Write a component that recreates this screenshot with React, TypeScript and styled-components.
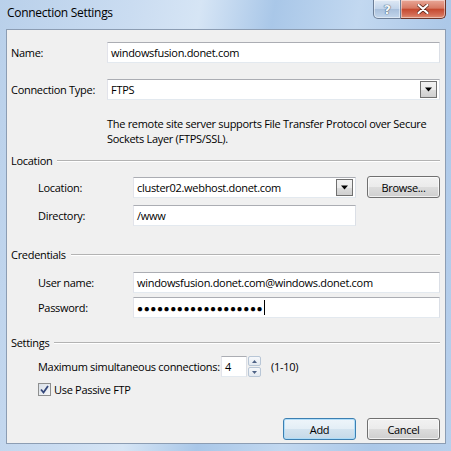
import React from "react";
import styled, { createGlobalStyle } from "styled-components";

const GlobalStyle = createGlobalStyle`
  html, body {
    margin: 0;
    padding: 0;
  }
  body {
    width: 451px;
    height: 451px;
    overflow: hidden;
    font-family: "Open Sans", "Noto Sans", sans-serif;
    font-size: 11px;
    letter-spacing: -0.3px;
    color: #000;
  }
`;

const Window = styled.div`
  width: 451px;
  height: 451px;
  box-sizing: border-box;
  display: flex;
  flex-direction: column;
  padding: 0 5px 7px 6px;
  background: linear-gradient(
    100deg,
    #b9d0ea 0%,
    #cadcf1 25%,
    #d6e5f5 38%,
    #a9c7e8 52%,
    #c2d8f0 68%,
    #acc8e8 85%,
    #b8d0ec 100%
  );
`;

const TitleBar = styled.div`
  height: 29px;
  display: flex;
  align-items: flex-start;
  justify-content: space-between;
`;

const Title = styled.div`
  padding: 5px 0 0 1px;
  font-size: 12px;
  line-height: 16px;
`;

const CaptionButtons = styled.div`
  display: flex;
`;

const CaptionButton = styled.div<{ $close?: boolean }>`
  width: ${(p) => (p.$close ? 45 : 28)}px;
  height: 19px;
  box-sizing: border-box;
  display: flex;
  align-items: center;
  justify-content: center;
  border: 1px solid ${(p) => (p.$close ? "#6d3529" : "#6c7e97")};
  border-top: none;
  border-left: ${(p) => (p.$close ? "none" : undefined)};
  border-radius: ${(p) => (p.$close ? "0 0 5px 0" : "0 0 0 5px")};
  background: ${(p) =>
    p.$close
      ? "linear-gradient(#e9a898, #d77a64 45%, #c54a30 52%, #d26a52 80%, #e08e72)"
      : "linear-gradient(#dfe9f5, #c2d4ea 48%, #a9c0dc 52%, #c3d6ec)"};
  box-shadow: inset 0 0 0 1px rgba(255, 255, 255, 0.45);
`;

const HelpGlyph = styled.span`
  font-family: "DejaVu Sans", sans-serif;
  font-size: 13px;
  font-weight: bold;
  color: #f4f8fc;
  text-shadow: 0 0 1px #33485f, 0 0 1px #33485f;
  line-height: 1;
`;

const Client = styled.div`
  flex: 1;
  display: flex;
  flex-direction: column;
  background: #f0f0f0;
  border: 1px solid #8c9db3;
  padding: 12px 5px 3px 4px;
`;

const TopGrid = styled.div`
  display: grid;
  grid-template-columns: 96px 1fr;
  row-gap: 16px;
  align-items: center;
`;

const Label = styled.div`
  line-height: 15px;
  white-space: nowrap;
`;

const Field = styled.div<{ $width?: number }>`
  height: 21px;
  box-sizing: border-box;
  width: ${(p) => (p.$width ? `${p.$width}px` : "auto")};
  display: flex;
  align-items: center;
  background: #fff;
  border: 1px solid #abadb3;
  border-color: #abadb3 #dbdfe6 #e3e9ef #e2e3ea;
  padding: 0 2px 0 3px;
  white-space: nowrap;
  overflow: hidden;
`;

const FieldText = styled.span`
  flex: 1;
`;

const DropButton = styled.div`
  width: 17px;
  height: 17px;
  box-sizing: border-box;
  display: flex;
  align-items: center;
  justify-content: center;
  border: 1px solid #707070;
  background: linear-gradient(#f2f2f2, #ebebeb 50%, #dddddd 50%, #cfcfcf);
`;

const Description = styled.div`
  grid-column: 2;
  line-height: 15px;
  width: 330px;
`;

const SectionHeader = styled.div<{ $top: number }>`
  display: flex;
  align-items: center;
  gap: 5px;
  margin-top: ${(p) => p.$top}px;
  line-height: 15px;
  &::after {
    content: "";
    flex: 1;
    border-top: 1px solid #b3b3b3;
    border-bottom: 1px solid #ffffff;
  }
`;

const SectionGrid = styled.div<{ $top: number; $gap: number; $cols: string }>`
  display: grid;
  grid-template-columns: ${(p) => p.$cols};
  row-gap: ${(p) => p.$gap}px;
  column-gap: 11px;
  align-items: center;
  margin-top: ${(p) => p.$top}px;
  padding-left: 27px;
`;

const Button = styled.div<{ $default?: boolean }>`
  width: 73px;
  height: 22px;
  box-sizing: border-box;
  display: flex;
  align-items: center;
  justify-content: center;
  border: 1px solid ${(p) => (p.$default ? "#3c7fb1" : "#707070")};
  border-radius: 3px;
  background: ${(p) =>
    p.$default
      ? "linear-gradient(#eef5fa, #e3eef6 50%, #d3e3ef 50%, #c5d9e8)"
      : "linear-gradient(#f2f2f2, #ebebeb 50%, #dddddd 50%, #cfcfcf)"};
  box-shadow: inset 0 0 0 1px
    ${(p) => (p.$default ? "rgba(170, 220, 250, 0.9)" : "rgba(255, 255, 255, 0.7)")};
`;

const SpinRow = styled.div<{ $top: number }>`
  display: flex;
  align-items: center;
  margin-top: ${(p) => p.$top}px;
  padding-left: 27px;
`;

const SpinLabel = styled(Label)`
  width: 183px;
`;

const SpinArrows = styled.div`
  display: flex;
  flex-direction: column;
  gap: 1px;
  margin-left: 1px;
`;

const SpinArrow = styled.div`
  width: 13px;
  height: 10px;
  box-sizing: border-box;
  display: flex;
  align-items: center;
  justify-content: center;
  border: 1px solid #b8c6d6;
  border-radius: 2px;
  background: linear-gradient(#f6f8fb, #e3e9f0);
`;

const RangeText = styled.span`
  margin-left: 10px;
`;

const CheckRow = styled.div`
  display: flex;
  align-items: center;
  gap: 3px;
  margin-top: 5px;
  padding-left: 27px;
`;

const CheckBox = styled.div`
  width: 13px;
  height: 13px;
  box-sizing: border-box;
  display: flex;
  align-items: center;
  justify-content: center;
  border: 1px solid #8e8f8f;
  background: linear-gradient(135deg, #d8dfe8, #f6f7f8);
`;

const Footer = styled.div`
  margin-top: auto;
  display: flex;
  justify-content: flex-end;
  gap: 11px;
`;

const Password = styled.span`
  font-size: 10px;
  letter-spacing: 0.6px;
`;

const Caret = styled.span`
  display: inline-block;
  width: 1px;
  height: 15px;
  background: #000;
  margin-left: 1px;
`;

const Triangle = ({ up, size = 7 }: { up?: boolean; size?: number }) => (
  <svg width={size} height={Math.ceil(size / 2) + 1} viewBox="0 0 7 4">
    <path d={up ? "M0 4 L3.5 0 L7 4 Z" : "M0 0 L7 0 L3.5 4 Z"} fill="#000" />
  </svg>
);

const SmallTriangle = ({ up }: { up?: boolean }) => (
  <svg width="5" height="3" viewBox="0 0 5 3">
    <path d={up ? "M0 3 L2.5 0 L5 3 Z" : "M0 0 L5 0 L2.5 3 Z"} fill="#4d6185" />
  </svg>
);

const ComboBox = ({ text, width }: { text: string; width?: number }) => (
  <Field $width={width}>
    <FieldText>{text}</FieldText>
    <DropButton>
      <Triangle />
    </DropButton>
  </Field>
);

export default function App() {
  return (
    <>
      <GlobalStyle />
      <Window>
        <TitleBar>
          <Title>Connection Settings</Title>
          <CaptionButtons>
            <CaptionButton>
              <HelpGlyph>?</HelpGlyph>
            </CaptionButton>
            <CaptionButton $close>
              <svg width="12" height="10" viewBox="0 0 12 10">
                <path
                  d="M1.5 1 L10.5 9 M10.5 1 L1.5 9"
                  stroke="#5b2318"
                  strokeWidth="3.6"
                  strokeLinecap="round"
                />
                <path
                  d="M1.5 1 L10.5 9 M10.5 1 L1.5 9"
                  stroke="#ffffff"
                  strokeWidth="2.2"
                  strokeLinecap="round"
                />
              </svg>
            </CaptionButton>
          </CaptionButtons>
        </TitleBar>

        <Client>
          <TopGrid>
            <Label>Name:</Label>
            <Field>
              <FieldText>windowsfusion.donet.com</FieldText>
            </Field>
            <Label>Connection Type:</Label>
            <ComboBox text="FTPS" />
            <Description>
              The remote site server supports File Transfer Protocol over Secure
              Sockets Layer (FTPS/SSL).
            </Description>
          </TopGrid>

          <SectionHeader $top={7}>Location</SectionHeader>
          <SectionGrid $top={8} $gap={7} $cols="84px 223px 73px">
            <Label>Location:</Label>
            <ComboBox text="cluster02.webhost.donet.com" />
            <Button>Browse...</Button>
            <Label>Directory:</Label>
            <Field>
              <FieldText>/www</FieldText>
            </Field>
          </SectionGrid>

          <SectionHeader $top={21}>Credentials</SectionHeader>
          <SectionGrid $top={10} $gap={4} $cols="84px 1fr">
            <Label>User name:</Label>
            <Field>
              <FieldText>windowsfusion.donet.com@windows.donet.com</FieldText>
            </Field>
            <Label>Password:</Label>
            <Field>
              <Password>{"●".repeat(19)}</Password>
              <Caret />
            </Field>
          </SectionGrid>

          <SectionHeader $top={17}>Settings</SectionHeader>
          <SpinRow $top={6}>
            <SpinLabel>Maximum simultaneous connections:</SpinLabel>
            <Field $width={26}>
              <FieldText>4</FieldText>
            </Field>
            <SpinArrows>
              <SpinArrow>
                <SmallTriangle up />
              </SpinArrow>
              <SpinArrow>
                <SmallTriangle />
              </SpinArrow>
            </SpinArrows>
            <RangeText>(1-10)</RangeText>
          </SpinRow>
          <CheckRow>
            <CheckBox>
              <svg width="9" height="9" viewBox="0 0 9 9">
                <path
                  d="M1 4.5 L3.5 7.5 L8 1"
                  stroke="#34477a"
                  strokeWidth="1.8"
                  fill="none"
                />
              </svg>
            </CheckBox>
            <Label>Use Passive FTP</Label>
          </CheckRow>

          <Footer>
            <Button $default>Add</Button>
            <Button>Cancel</Button>
          </Footer>
        </Client>
      </Window>
    </>
  );
}
